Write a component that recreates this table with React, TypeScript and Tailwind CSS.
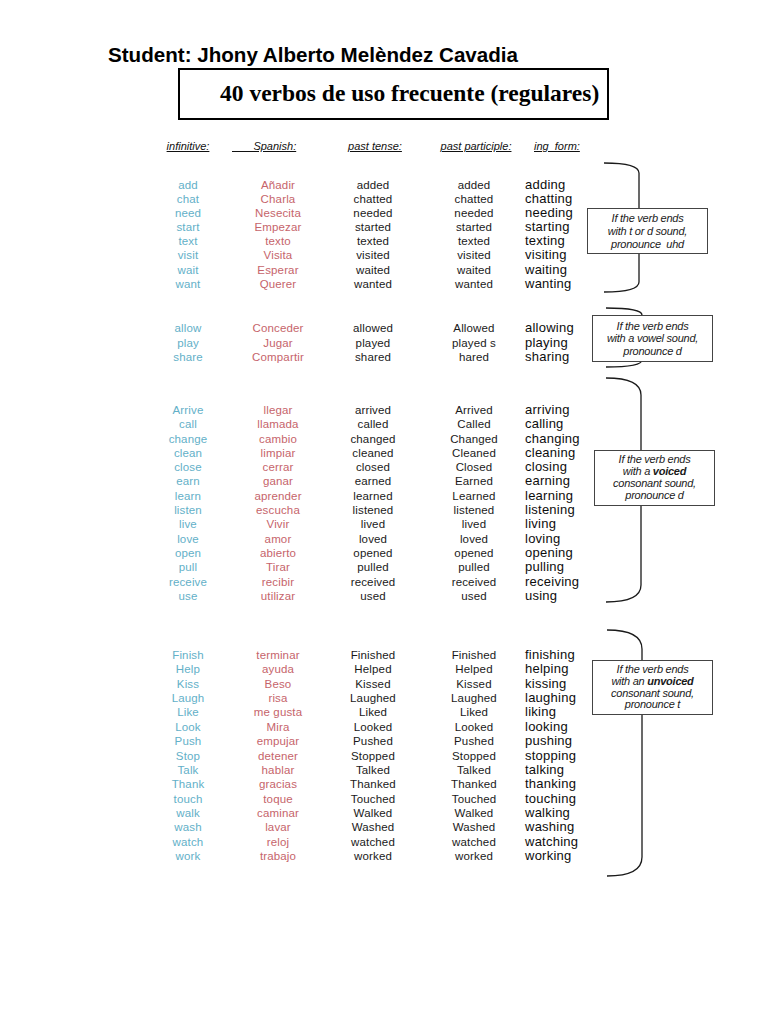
type Row = [string, string, string, string, string]

type Group = {
  rows: Row[]
  gap: string
  pad: string
  lead: string
  height: number
  noteShift: string
  noteTop: string
  noteH: string
  noteLead: string
  x0: number
  x1: number
  curve: number
  note: React.ReactNode
}

const groups: Group[] = [
  {
    rows: [
      ['add', 'Añadir', 'added', 'added', 'adding'],
      ['chat', 'Charla', 'chatted', 'chatted', 'chatting'],
      ['need', 'Nesecita', 'needed', 'needed', 'needing'],
      ['start', 'Empezar', 'started', 'started', 'starting'],
      ['text', 'texto', 'texted', 'texted', 'texting'],
      ['visit', 'Visita', 'visited', 'visited', 'visiting'],
      ['wait', 'Esperar', 'waited', 'waited', 'waiting'],
      ['want', 'Querer', 'wanted', 'wanted', 'wanting'],
    ],
    gap: 'mt-[9px]',
    pad: 'pt-[16px]',
    lead: 'leading-[14.1px]',
    height: 131,
    noteShift: 'ml-0',
    noteTop: 'mt-[46px]',
    noteH: 'h-[46px]',
    noteLead: 'leading-[13px]',
    x0: 17,
    x1: 52,
    curve: 11,
    note: (
      <>
        If the verb ends
        <br />
        with t or d sound,
        <br />
        pronounce&nbsp; uhd
      </>
    ),
  },
  {
    rows: [
      ['allow', 'Conceder', 'allowed', 'Allowed', 'allowing'],
      ['play', 'Jugar', 'played', 'played s', 'playing'],
      ['share', 'Compartir', 'shared', 'hared', 'sharing'],
    ],
    gap: 'mt-[14px]',
    pad: 'pt-[14px]',
    lead: 'leading-[14.5px]',
    height: 61,
    noteShift: 'ml-[5px]',
    noteTop: 'mt-[8px]',
    noteH: 'h-[47px]',
    noteLead: 'leading-[12.5px]',
    x0: 14,
    x1: 50,
    curve: 8,
    note: (
      <>
        If the verb ends
        <br />
        with a vowel sound,
        <br />
        pronounce d
      </>
    ),
  },
  {
    rows: [
      ['Arrive', 'llegar', 'arrived', 'Arrived', 'arriving'],
      ['call', 'llamada', 'called', 'Called', 'calling'],
      ['change', 'cambio', 'changed', 'Changed', 'changing'],
      ['clean', 'limpiar', 'cleaned', 'Cleaned', 'cleaning'],
      ['close', 'cerrar', 'closed', 'Closed', 'closing'],
      ['earn', 'ganar', 'earned', 'Earned', 'earning'],
      ['learn', 'aprender', 'learned', 'Learned', 'learning'],
      ['listen', 'escucha', 'listened', 'listened', 'listening'],
      ['live', 'Vivir', 'lived', 'lived', 'living'],
      ['love', 'amor', 'loved', 'loved', 'loving'],
      ['open', 'abierto', 'opened', 'opened', 'opening'],
      ['pull', 'Tirar', 'pulled', 'pulled', 'pulling'],
      ['receive', 'recibir', 'received', 'received', 'receiving'],
      ['use', 'utilizar', 'used', 'used', 'using'],
    ],
    gap: 'mt-[9px]',
    pad: 'pt-[26px]',
    lead: 'leading-[14.3px]',
    height: 226,
    noteShift: 'ml-[7px]',
    noteTop: 'mt-[73px]',
    noteH: 'h-[56px]',
    noteLead: 'leading-[11.8px]',
    x0: 12,
    x1: 47,
    curve: 18,
    note: (
      <>
        If the verb ends
        <br />
        with a <b className="font-bold">voiced</b>
        <br />
        consonant sound,
        <br />
        pronounce d
      </>
    ),
  },
  {
    rows: [
      ['Finish', 'terminar', 'Finished', 'Finished', 'finishing'],
      ['Help', 'ayuda', 'Helped', 'Helped', 'helping'],
      ['Kiss', 'Beso', 'Kissed', 'Kissed', 'kissing'],
      ['Laugh', 'risa', 'Laughed', 'Laughed', 'laughing'],
      ['Like', 'me gusta', 'Liked', 'Liked', 'liking'],
      ['Look', 'Mira', 'Looked', 'Looked', 'looking'],
      ['Push', 'empujar', 'Pushed', 'Pushed', 'pushing'],
      ['Stop', 'detener', 'Stopped', 'Stopped', 'stopping'],
      ['Talk', 'hablar', 'Talked', 'Talked', 'talking'],
      ['Thank', 'gracias', 'Thanked', 'Thanked', 'thanking'],
      ['touch', 'toque', 'Touched', 'Touched', 'touching'],
      ['walk', 'caminar', 'Walked', 'Walked', 'walking'],
      ['wash', 'lavar', 'Washed', 'Washed', 'washing'],
      ['watch', 'reloj', 'watched', 'watched', 'watching'],
      ['work', 'trabajo', 'worked', 'worked', 'working'],
    ],
    gap: 'mt-[26px]',
    pad: 'pt-[19px]',
    lead: 'leading-[14.36px]',
    height: 248,
    noteShift: 'ml-[5px]',
    noteTop: 'mt-[31px]',
    noteH: 'h-[55px]',
    noteLead: 'leading-[11.8px]',
    x0: 15,
    x1: 50,
    curve: 20,
    note: (
      <>
        If the verb ends
        <br />
        with an <b className="font-bold">unvoiced</b>
        <br />
        consonant sound,
        <br />
        pronounce t
      </>
    ),
  },
]

function Bracket({ h, x0, x1, c }: { h: number; x0: number; x1: number; c: number }) {
  const d = `M ${x0} 1 Q ${x1} 1 ${x1} ${c} L ${x1} ${h - c} Q ${x1} ${h - 1} ${x0} ${h - 1}`
  return (
    <svg className="absolute left-0 top-0" width={70} height={h} viewBox={`0 0 70 ${h}`}>
      <path d={d} fill="none" stroke="#1a1a1a" strokeWidth={1.3} />
    </svg>
  )
}

const COLS = 'grid grid-cols-[90px_90px_100px_102px_62px]'

function Section({ g }: { g: Group }) {
  return (
    <section className={`flex items-start ${g.gap}`} style={{ height: g.height }}>
      <div className={`ml-[143px] ${g.pad} ${COLS} text-[11.5px] tracking-[0.15px] ${g.lead}`}>
        {g.rows.map((r) => (
          <div key={r[0]} className="contents">
            <div className="text-center text-[#63b0c8]">{r[0]}</div>
            <div className="text-center text-[#c6646b]">{r[1]}</div>
            <div className="text-center text-[#1a1a1a]">{r[2]}</div>
            <div className="text-center text-[#1a1a1a]">{r[3]}</div>
            <div className="whitespace-nowrap text-[13px] tracking-[0.25px] text-[#0d0d0d]">{r[4]}</div>
          </div>
        ))}
      </div>
      <div className={`relative h-full w-[130px] ${g.noteShift}`}>
        <Bracket h={g.height} x0={g.x0} x1={g.x1} c={g.curve} />
        <div
          className={`relative ${g.noteTop} ${g.noteH} w-[121px] border border-[#444] bg-white flex items-center justify-center text-center text-[11px] italic tracking-[-0.25px] text-[#1a1a1a] ${g.noteLead}`}
        >
          <p>{g.note}</p>
        </div>
      </div>
    </section>
  )
}

export default function App() {
  return (
    <div className="min-h-[1024px] w-[768px] bg-white font-['Liberation_Sans',Arial,sans-serif] text-black">
      <h1 className="pl-[108px] pt-[43px] text-[20.6px] font-bold leading-[24px]">
        Student: Jhony Alberto Melèndez Cavadia
      </h1>
      <div className="ml-[178px] mt-[1px] flex h-[52px] w-[431px] items-center border-2 border-black pl-[40px]">
        <span className="font-['Liberation_Serif',serif] text-[23.5px] font-bold leading-none">
          40 verbos de uso frecuente (regulares)
        </span>
      </div>
      <div className={`ml-[143px] mt-[19px] ${COLS} text-[11px] italic leading-[14px] text-[#111]`}>
        <div className="text-center">
          <span className="underline">infinitive:</span>
        </div>
        <div className="-ml-px text-left">
          <span className="underline">&nbsp;&nbsp;&nbsp;&nbsp;&nbsp;&nbsp;&nbsp;Spanish:</span>
        </div>
        <div className="pl-[4px] text-center">
          <span className="underline">past tense:</span>
        </div>
        <div className="pl-[4px] text-center">
          <span className="underline">past participle:</span>
        </div>
        <div className="whitespace-nowrap pl-[9px]">
          <span className="underline">ing&nbsp; form:</span>
        </div>
      </div>
      {groups.map((g, i) => (
        <Section key={i} g={g} />
      ))}
    </div>
  )
}
